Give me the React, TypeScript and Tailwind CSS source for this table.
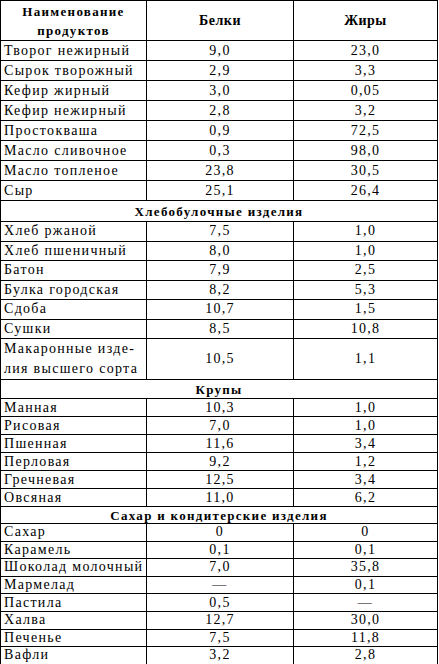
import React from 'react';

const dairy: [string, string, string][] = [
    ['Творог нежирный', '9,0', '23,0'],
    ['Сырок творожный', '2,9', '3,3'],
    ['Кефир жирный', '3,0', '0,05'],
    ['Кефир нежирный', '2,8', '3,2'],
    ['Простокваша', '0,9', '72,5'],
    ['Масло сливочное', '0,3', '98,0'],
    ['Масло топленое', '23,8', '30,5'],
    ['Сыр', '25,1', '26,4'],
];

const bread: [string, string, string][] = [
    ['Хлеб ржаной', '7,5', '1,0'],
    ['Хлеб пшеничный', '8,0', '1,0'],
    ['Батон', '7,9', '2,5'],
    ['Булка городская', '8,2', '5,3'],
    ['Сдоба', '10,7', '1,5'],
    ['Сушки', '8,5', '10,8'],
];

const grains: [string, string, string][] = [
    ['Манная', '10,3', '1,0'],
    ['Рисовая', '7,0', '1,0'],
    ['Пшенная', '11,6', '3,4'],
    ['Перловая', '9,2', '1,2'],
    ['Гречневая', '12,5', '3,4'],
    ['Овсяная', '11,0', '6,2'],
];

const sweets: [string, string, string][] = [
    ['Сахар', '0', '0'],
    ['Карамель', '0,1', '0,1'],
    ['Шоколад молочный', '7,0', '35,8'],
    ['Мармелад', '—', '0,1'],
    ['Пастила', '0,5', '—'],
    ['Халва', '12,7', '30,0'],
    ['Печенье', '7,5', '11,8'],
    ['Вафли', '3,2', '2,8'],
];

const cell = 'border border-black p-0 whitespace-nowrap';

function Rows({ items, h }: { items: [string, string, string][]; h: string }) {
    return (
        <>
            {items.map(([name, b, f]) => (
                <tr key={name} className={h}>
                    <td className={`${cell} leading-none pl-[3px] text-left`}>{name}</td>
                    <td className={`${cell} leading-none text-center`}>{b}</td>
                    <td className={`${cell} leading-none text-center`}>{f}</td>
                </tr>
            ))}
        </>
    );
}

function Section({ title, h }: { title: string; h: string }) {
    return (
        <tr className={h}>
            <td colSpan={3} className={`${cell} leading-none text-center font-bold text-[13px] tracking-[1.3px]`}>
                {title}
            </td>
        </tr>
    );
}

export default function App() {
    return (
        <div className="w-[439px] h-[664px] bg-white text-black overflow-hidden font-['Liberation_Serif','DejaVu_Serif',serif]">
            <table className="border-collapse table-fixed w-[438px] text-[14px] tracking-[1.3px]">
                <colgroup>
                    <col className="w-[146px]" />
                    <col className="w-[147px]" />
                    <col />
                </colgroup>
                <thead>
                    <tr className="h-[40px]">
                        <th className={`${cell} font-bold text-[13px] tracking-[1.3px] leading-[19px]`}>
                            Наименование
                            <br />
                            продуктов
                        </th>
                        <th className={`${cell} leading-none font-bold text-[14px] tracking-[0.5px]`}>Белки</th>
                        <th className={`${cell} leading-none font-bold text-[14px] tracking-[0.5px]`}>Жиры</th>
                    </tr>
                </thead>
                <tbody>
                    <Rows items={dairy} h="h-[20px]" />
                    <Section title="Хлебобулочные изделия" h="h-[21px]" />
                    <Rows items={bread} h="h-[19.5px]" />
                    <tr className="h-[40px]">
                        <td className={`${cell} pl-[3px] text-left leading-[20px]`}>
                            Макаронные изде-
                            <br />
                            лия высшего сорта
                        </td>
                        <td className={`${cell} leading-none text-center`}>10,5</td>
                        <td className={`${cell} leading-none text-center`}>1,1</td>
                    </tr>
                    <Section title="Крупы" h="h-[19px]" />
                    <Rows items={grains} h="h-[18px]" />
                    <Section title="Сахар и кондитерские изделия" h="h-[17px]" />
                    <Rows items={sweets} h="h-[17.6px]" />
                </tbody>
            </table>
        </div>
    );
}
